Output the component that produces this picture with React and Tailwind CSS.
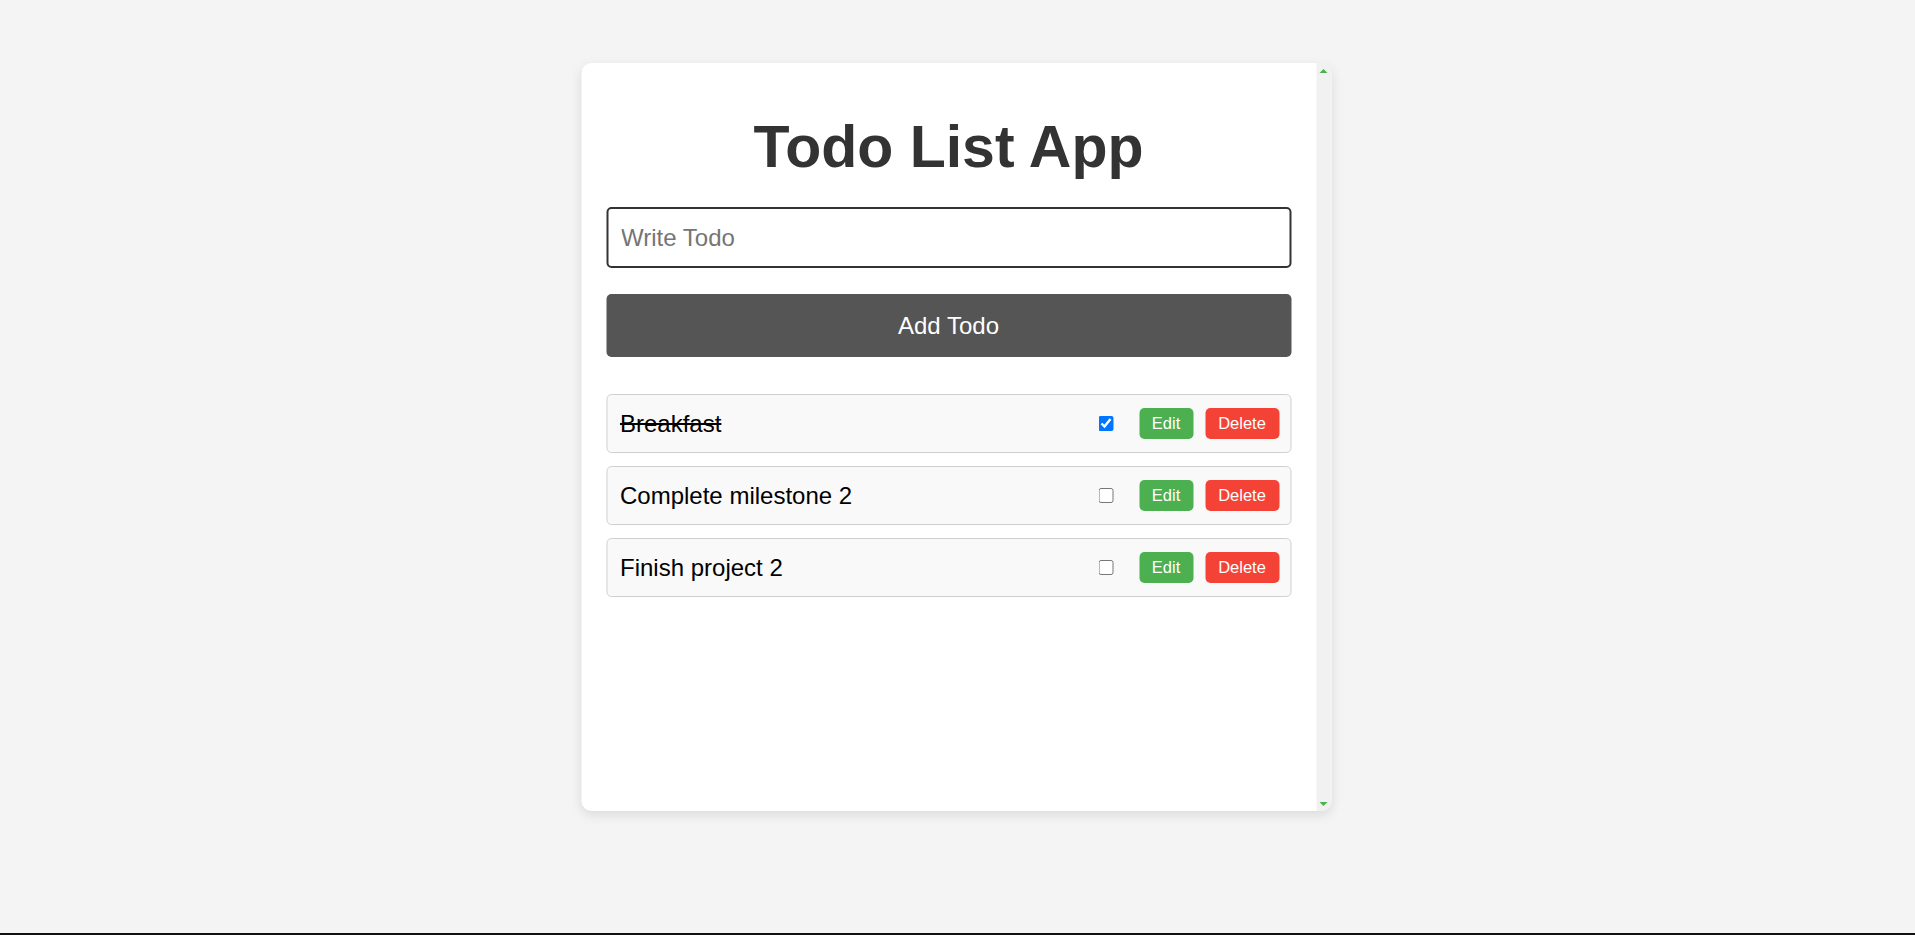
import React, { useState } from "react";

const initialTodos = [
  { id: 1, text: "Breakfast", done: true },
  { id: 2, text: "Complete milestone 2", done: false },
  { id: 3, text: "Finish project 2", done: false },
];

function TodoItem({ todo, onToggle }) {
  return (
    <li className="flex items-center h-[59px] pl-[13px] pr-[11px] bg-[#f9f9f9] border border-[#cfcfcf] rounded-[5px]">
      <span
        className={
          "flex-1 text-[24px] text-black leading-[28px] " +
          (todo.done ? "line-through" : "")
        }
      >
        {todo.text}
      </span>
      <input
        type="checkbox"
        checked={todo.done}
        onChange={() => onToggle(todo.id)}
        className="m-0 w-[15px] h-[15px] accent-[#0075ff]"
      />
      <button className="ml-[26px] w-[54px] h-[31px] rounded-[5px] bg-[#4caf50] text-white text-[16.5px] leading-none">
        Edit
      </button>
      <button className="ml-[12px] w-[74px] h-[31px] rounded-[5px] bg-[#f44336] text-white text-[16.5px] leading-none">
        Delete
      </button>
    </li>
  );
}

// the card's scrollbar track, with its two green arrow buttons
function ScrollTrack() {
  return (
    <div className="w-[15px] bg-[#f1f1f1] flex flex-col justify-between">
      <div className="h-[15px] flex items-center justify-center">
        <div className="w-0 h-0 border-x-[4px] border-x-transparent border-b-[4px] border-b-[#4caf50]" />
      </div>
      <div className="h-[15px] flex items-center justify-center">
        <div className="w-0 h-0 border-x-[4px] border-x-transparent border-t-[4px] border-t-[#4caf50]" />
      </div>
    </div>
  );
}

export default function App() {
  const [todos, setTodos] = useState(initialTodos);
  const [value, setValue] = useState("");

  const toggle = (id) => {
    setTodos((prev) =>
      prev.map((t) => (t.id === id ? { ...t, done: !t.done } : t))
    );
  };

  return (
    <div
      className="h-screen overflow-hidden bg-[#f4f4f4] border-b-2 border-[#111] pt-[63px]"
      style={{ fontFamily: '"Liberation Sans", Arial, sans-serif' }}
    >
      <div className="mx-auto w-[750px] h-[748px] flex bg-white rounded-[10px] overflow-hidden shadow-[0_4px_12px_rgba(0,0,0,0.1)] -translate-x-[1.5px]">
        <div className="flex-1 px-[25px] pt-[50px]">
          <h1 className="text-center text-[59px] leading-[68px] font-bold text-[#333]">
            Todo List App
          </h1>

          <input
            type="text"
            placeholder="Write Todo"
            value={value}
            onChange={(e) => setValue(e.target.value)}
            className="mt-[26px] block w-full h-[61px] px-[13px] border-2 border-[#333] rounded-[5px] text-[24px] outline-none placeholder:text-[#757575]"
          />

          <button className="mt-[26px] block w-full h-[63px] bg-[#555] rounded-[5px] text-white text-[24px]">
            Add Todo
          </button>

          <ul className="mt-[37px] flex flex-col gap-[13px]">
            {todos.map((todo) => (
              <TodoItem key={todo.id} todo={todo} onToggle={toggle} />
            ))}
          </ul>
        </div>
        <ScrollTrack />
      </div>
    </div>
  );
}
